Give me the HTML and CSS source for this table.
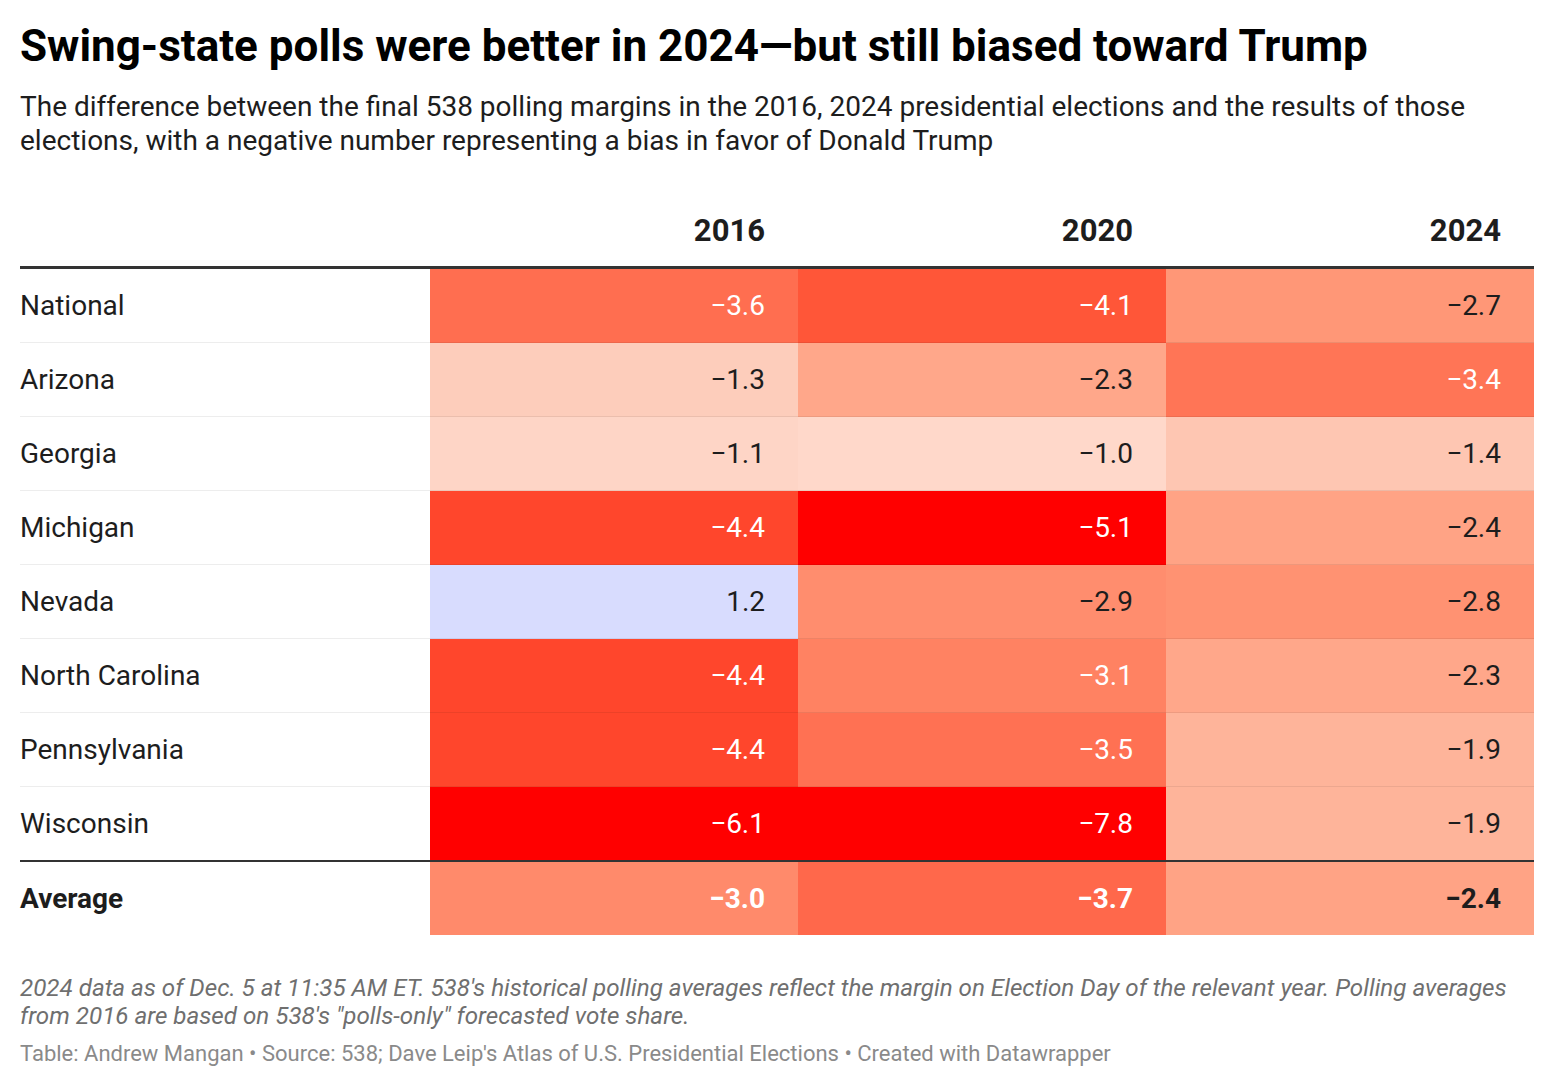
FILE: index.html
```html
<!DOCTYPE html>
<html>
<head>
<meta charset="utf-8">
<link rel="stylesheet" href="styles.css">
</head>
<body>
<div class="chart">
  <h1 class="title">Swing-state polls were better in 2024—but still biased toward Trump</h1>
  <p class="desc">The difference between the final 538 polling margins in the 2016, 2024 presidential elections and the results of those elections, with a negative number representing a bias in favor of Donald Trump</p>
  <table class="tbl">
    <thead>
      <tr><th class="lab"></th><th>2016</th><th>2020</th><th>2024</th></tr>
    </thead>
    <tbody>
      <tr><td class="lab">National</td><td class="c36 w">−3.6</td><td class="c41 w">−4.1</td><td class="c27">−2.7</td></tr>
      <tr><td class="lab">Arizona</td><td class="c13">−1.3</td><td class="c23">−2.3</td><td class="c34 w">−3.4</td></tr>
      <tr><td class="lab">Georgia</td><td class="c11">−1.1</td><td class="c10">−1.0</td><td class="c14">−1.4</td></tr>
      <tr><td class="lab">Michigan</td><td class="c44 w">−4.4</td><td class="c51 w">−5.1</td><td class="c24">−2.4</td></tr>
      <tr><td class="lab">Nevada</td><td class="p12">1.2</td><td class="c29">−2.9</td><td class="c28">−2.8</td></tr>
      <tr><td class="lab">North Carolina</td><td class="c44 w">−4.4</td><td class="c31 w">−3.1</td><td class="c23">−2.3</td></tr>
      <tr><td class="lab">Pennsylvania</td><td class="c44 w">−4.4</td><td class="c35 w">−3.5</td><td class="c19">−1.9</td></tr>
      <tr><td class="lab">Wisconsin</td><td class="c61 w">−6.1</td><td class="c78 w">−7.8</td><td class="c19">−1.9</td></tr>
      <tr class="avg"><td class="lab">Average</td><td class="c30 w">−3.0</td><td class="c37 w">−3.7</td><td class="c24">−2.4</td></tr>
    </tbody>
  </table>
  <p class="notes">2024 data as of Dec. 5 at 11:35 AM ET. 538's historical polling averages reflect the margin on Election Day of the relevant year. Polling averages from 2016 are based on 538's "polls-only" forecasted vote share.</p>
  <p class="byline">Table: Andrew Mangan • Source: 538; Dave Leip's Atlas of U.S. Presidential Elections • Created with Datawrapper</p>
</div>
</body>
</html>
```

FILE: styles.css
```css
html, body {
  margin: 0;
  padding: 0;
  background: #ffffff;
}
body {
  font-family: Roboto, "Liberation Sans", sans-serif;
  color: #1d1d1d;
}
.chart {
  padding: 20px 20px 0 20px;
}
.title {
  margin: 0;
  font-size: 44px;
  line-height: 52px;
  font-weight: 700;
  color: #000;
}
.desc {
  margin: 18px 0 0 0;
  font-size: 28px;
  line-height: 34px;
  color: #1d1d1d;
}
.tbl {
  margin-top: 36px;
  width: 100%;
  border-collapse: collapse;
  table-layout: fixed;
  font-size: 28px;
}
.tbl th {
  height: 72px;
  padding: 0 33px 0 0;
  text-align: right;
  font-weight: 700;
  font-size: 31px;
  vertical-align: middle;
  border-bottom: 3px solid #333;
}
.tbl th.lab {
  width: 410px;
  padding: 0;
}
.tbl td {
  height: 73px;
  padding: 0 33px 0 0;
  text-align: right;
  border-bottom: 1px solid rgba(0,0,0,0.07);
  color: #1d1d1d;
}
.tbl td.lab {
  text-align: left;
  padding: 0;
}
.tbl tr:nth-last-child(2) td {
  border-bottom: 2px solid #333;
}
.tbl tr.avg td {
  font-weight: 700;
  border-bottom: none;
}
.tbl td.w { color: #fff; }

.c78, .c61, .c51 { background: #ff0000; }
.c44 { background: #ff462c; }
.c41 { background: #ff5638; }
.c37 { background: #ff684b; }
.c36 { background: #ff6e50; }
.c35 { background: #ff7153; }
.c34 { background: #ff7556; }
.c31 { background: #ff8262; }
.c30 { background: #ff8a6b; }
.c29 { background: #ff8d6e; }
.c28 { background: #ff9272; }
.c27 { background: #ff9777; }
.c24 { background: #ffa385; }
.c23 { background: #ffa78a; }
.c19 { background: #feb49a; }
.c14 { background: #fec6b2; }
.c13 { background: #fdcdbb; }
.c11 { background: #fed5c6; }
.c10 { background: #ffd8ca; }
.p12 { background: #d8dcfe; }

.notes {
  margin: 39px 0 0 0;
  font-size: 24.2px;
  line-height: 28px;
  font-style: italic;
  color: #6f6f6f;
}
.byline {
  margin: 10px 0 0 0;
  font-size: 22px;
  line-height: 28px;
  color: #8a8a8a;
}
```
